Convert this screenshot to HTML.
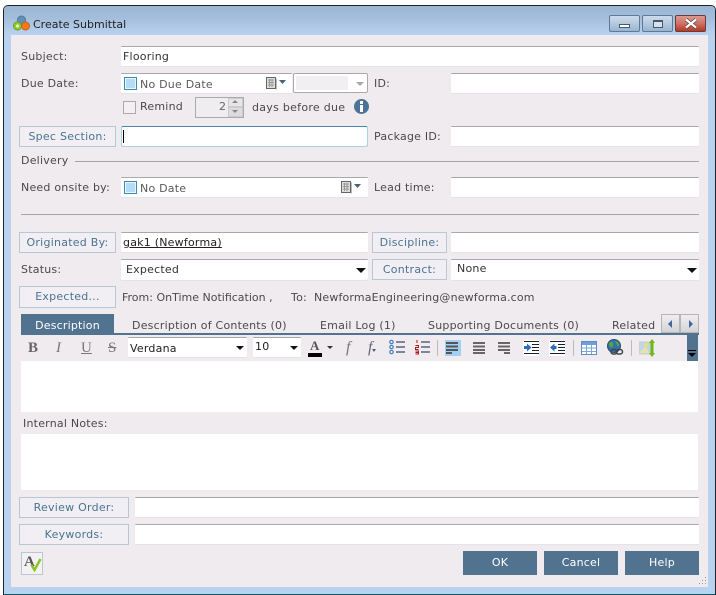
<!DOCTYPE html>
<html><head><meta charset="utf-8"><style>
html,body{margin:0;padding:0;background:#fff}
#r{position:relative;width:716px;height:595px;overflow:hidden;background:#fff;font-family:"DejaVu Sans","Liberation Sans",sans-serif;font-size:11px;color:#4a4a4a}
#r div,#r svg{position:absolute}
.t{white-space:nowrap;line-height:14px;height:14px;margin-top:1px;letter-spacing:.22px}
.i{background:#fff;border-top:1px solid #aaa8ae;box-sizing:border-box;border-radius:1px;box-shadow:0 1px 0 #e4e4e8}
.b{background:#f1eff4;border:1px solid #b7c8d4;box-sizing:border-box;color:#4a7390;text-align:center;white-space:nowrap;letter-spacing:.25px}
.k{background:#527390;color:#fff;text-align:center;line-height:24px;top:551px;height:24px;width:74px;letter-spacing:.2px}
</style></head><body><div id="r">
<div style="left:3px;top:5px;width:713px;height:590px;background:#b9d2ef;border:1px solid #222;border-bottom:1px solid #0a5a6a;border-radius:5px 5px 0 0;box-sizing:border-box"></div>
<div style="left:4px;top:6px;width:711px;height:29px;background:linear-gradient(#9ab6d5,#a3bddb 40%,#b9d2ef);border-radius:4px 4px 0 0"></div>
<div style="left:11px;top:35px;width:697px;height:552px;background:#efebee"></div>

<svg style="left:13px;top:15px" width="18" height="16" viewBox="0 0 18 16"><circle cx="8.500" cy="5" r="4" fill="#5b93c0" stroke="#5f7486"/><circle cx="4.500" cy="11" r="4" fill="#8fce2c" stroke="#6f9a2c"/><circle cx="12.500" cy="11" r="4" fill="#f07a1c" stroke="#c9620f"/><circle cx="4.500" cy="11" r="1.500" fill="#e6f5c5"/></svg>
<div class="t" style="left:33px;top:17px;color:#222;font-size:11px;letter-spacing:0">Create Submittal</div>

<div style="left:609px;top:15px;width:31px;height:17px;box-sizing:border-box;border:1px solid #5d7a96;border-radius:2px;background:linear-gradient(#cddbeb,#b4c9e0 50%,#9ab4d0)"></div>
<div style="left:619px;top:24px;width:11px;height:4px;background:#fff;border:1px solid #46586a;box-sizing:border-box"></div>
<div style="left:642px;top:15px;width:31px;height:17px;box-sizing:border-box;border:1px solid #5d7a96;border-radius:2px;background:linear-gradient(#cddbeb,#b4c9e0 50%,#9ab4d0)"></div>
<div style="left:653px;top:20px;width:10px;height:8px;box-sizing:border-box;border:1px solid #46586a;border-top-width:2px;background:#d5e1ee"></div>
<div style="left:675px;top:15px;width:31px;height:17px;box-sizing:border-box;border:1px solid #6e3a38;border-radius:2px;background:linear-gradient(#dc9a90,#cf7163 50%,#b33a24)"></div>
<svg style="left:684px;top:18px" width="14" height="11" viewBox="0 0 14 11"><path d="M2 1.500L12 9.500M12 1.500L2 9.500" stroke="#4a3a3a" stroke-width="3.600"/><path d="M2 1.500L12 9.500M12 1.500L2 9.500" stroke="#fff" stroke-width="2.400"/></svg>

<div class="t" style="left:21px;top:49px">Subject:</div>
<div class="i" style="left:121px;top:46px;width:578px;height:20px"></div>
<div class="t" style="left:123px;top:49px;color:#333">Flooring</div>

<div class="t" style="left:21px;top:76px">Due Date:</div>
<div class="i" style="left:121px;top:73px;width:171px;height:20px"></div>
<div style="left:124px;top:77px;width:13px;height:13px;box-sizing:border-box;border:1px solid #3f8bb0;background:#b5dcf7;outline:1px solid #eaf6fe;outline-offset:-2px"></div>
<div class="t" style="left:140px;top:77px;color:#5a5a5a">No Due Date</div>
<svg style="left:266px;top:77px" width="22" height="13" viewBox="0 0 22 13"><rect x=".5" y=".5" width="9" height="11" fill="#ddd" stroke="#666"/><path d="M2 3h6M2 5.500h6M2 8h6M3.500 2v8M6 2v8" stroke="#999"/><path d="M10.500 1.500v11" stroke="#bbb"/><path d="M13 3h7l-3.500 4z" fill="#46627c"/></svg>
<div style="left:293px;top:73px;width:75px;height:20px;background:#fff;border:1px solid #aaa;box-sizing:border-box;border-radius:2px"></div>
<div style="left:296px;top:76px;width:52px;height:14px;background:#f2eff2"></div>
<div style="left:356px;top:82px;border:4px solid transparent;border-top:4px solid #a8a8a8;border-bottom:0"></div>
<div class="t" style="left:374px;top:76px">ID:</div>
<div class="i" style="left:451px;top:73px;width:248px;height:20px"></div>

<div style="left:123px;top:101px;width:13px;height:13px;box-sizing:border-box;border:1px solid #aaa;background:#f2f0f3"></div>
<div class="t" style="left:140px;top:99px">Remind</div>
<div style="left:195px;top:97px;width:49px;height:21px;box-sizing:border-box;border:1px solid #aaa;background:#f0edf0"></div>
<div class="t" style="left:219px;top:99px;color:#666">2</div>
<div style="left:228px;top:98px;width:15px;height:9px;background:#e6e6e8;border:1px solid #ccc;box-sizing:border-box"></div>
<div style="left:228px;top:107px;width:15px;height:10px;background:#dcdcde;border:1px solid #ccc;box-sizing:border-box"></div>
<div style="left:232px;top:100px;border:3px solid transparent;border-bottom:3px solid #888;border-top:0"></div>
<div style="left:232px;top:110px;border:3px solid transparent;border-top:3px solid #888;border-bottom:0"></div>
<div class="t" style="left:252px;top:100px;letter-spacing:.28px">days before due</div>
<div style="left:354px;top:99px;width:15px;height:15px;border-radius:50%;background:#4b7398"></div>
<div style="left:360px;top:101px;width:3px;height:3px;background:#fff"></div>
<div style="left:360px;top:105px;width:3px;height:7px;background:#fff"></div>

<div class="b" style="left:19px;top:126px;width:97px;height:21px;line-height:19px">Spec Section:</div>
<div style="left:121px;top:126px;width:247px;height:21px;background:#fff;box-sizing:border-box;border:1px solid #a8d0ea;border-top:1px solid #4a86b0;border-radius:2px"></div>
<div style="left:123px;top:130px;width:1px;height:13px;background:#000"></div>
<div class="t" style="left:374px;top:129px">Package ID:</div>
<div class="i" style="left:451px;top:126px;width:248px;height:20px"></div>

<div class="t" style="left:21px;top:153px">Delivery</div>
<div style="left:75px;top:161px;width:624px;height:1px;background:#a5a3a9"></div>
<div class="t" style="left:21px;top:180px">Need onsite by:</div>
<div class="i" style="left:121px;top:177px;width:247px;height:20px"></div>
<div style="left:124px;top:181px;width:13px;height:13px;box-sizing:border-box;border:1px solid #3f8bb0;background:#b5dcf7;outline:1px solid #eaf6fe;outline-offset:-2px"></div>
<div class="t" style="left:140px;top:181px;color:#5a5a5a">No Date</div>
<svg style="left:341px;top:181px" width="22" height="13" viewBox="0 0 22 13"><rect x=".5" y=".5" width="9" height="11" fill="#ddd" stroke="#666"/><path d="M2 3h6M2 5.500h6M2 8h6M3.500 2v8M6 2v8" stroke="#999"/><path d="M10.500 1.500v11" stroke="#bbb"/><path d="M13 3h7l-3.500 4z" fill="#46627c"/></svg>
<div class="t" style="left:374px;top:180px">Lead time:</div>
<div class="i" style="left:451px;top:177px;width:248px;height:20px"></div>
<div style="left:21px;top:214px;width:678px;height:1px;background:#a5a3a9"></div>

<div class="b" style="left:19px;top:232px;width:97px;height:21px;line-height:19px">Originated By:</div>
<div class="i" style="left:121px;top:232px;width:247px;height:20px"></div>
<div class="t" style="left:123px;top:235px;color:#222;text-decoration:underline">gak1 (Newforma)</div>
<div class="b" style="left:372px;top:232px;width:75px;height:21px;line-height:19px">Discipline:</div>
<div class="i" style="left:451px;top:232px;width:248px;height:20px"></div>

<div class="t" style="left:21px;top:262px">Status:</div>
<div class="i" style="left:121px;top:259px;width:247px;height:21px"></div>
<div class="t" style="left:126px;top:262px;color:#333">Expected</div>
<div style="left:356px;top:268px;border:5px solid transparent;border-top:5px solid #111;border-bottom:0"></div>
<div class="b" style="left:372px;top:259px;width:75px;height:21px;line-height:19px">Contract:</div>
<div class="i" style="left:451px;top:259px;width:248px;height:21px"></div>
<div class="t" style="left:457px;top:261px;color:#333">None</div>
<div style="left:687px;top:268px;border:5px solid transparent;border-top:5px solid #111;border-bottom:0"></div>

<div class="b" style="left:19px;top:286px;width:97px;height:22px;line-height:20px">Expected...</div>
<div class="t" style="left:122px;top:290px;letter-spacing:0">From: OnTime Notification ,</div>
<div class="t" style="left:291px;top:290px">To:</div>
<div class="t" style="left:314px;top:290px;letter-spacing:.16px">NewformaEngineering@newforma.com</div>

<div style="left:21px;top:314px;width:93px;height:19px;background:#527390;color:#fff;text-align:center;line-height:23px;letter-spacing:.2px">Description</div>
<div class="t" style="left:132px;top:318px">Description of Contents (0)</div>
<div class="t" style="left:320px;top:318px">Email Log (1)</div>
<div class="t" style="left:428px;top:318px">Supporting Documents (0)</div>
<div class="t" style="left:612px;top:318px">Related</div>
<div style="left:661px;top:314px;width:19px;height:19px;box-sizing:border-box;border:1px solid #b5b5b8;background:linear-gradient(#f0eef0,#d4d4d8)"></div>
<div style="left:680px;top:314px;width:19px;height:19px;box-sizing:border-box;border:1px solid #b5b5b8;background:linear-gradient(#f0eef0,#d4d4d8)"></div>
<div style="left:668px;top:320px;border:4px solid transparent;border-right:4px solid #46659a;border-left:0"></div>
<div style="left:689px;top:320px;border:4px solid transparent;border-left:4px solid #46659a;border-right:0"></div>
<div style="left:21px;top:333px;width:678px;height:2px;background:#527390"></div>
<div style="left:687px;top:335px;width:11px;height:26px;background:#527390"></div>
<div style="left:688px;top:350px;width:8px;height:1px;background:#000"></div>
<div style="left:688px;top:353px;border:4px solid transparent;border-top:4px solid #000;border-bottom:0"></div>

<div class="t" style="left:28px;top:340px;font-family:'Liberation Serif',serif;font-size:15px;font-weight:bold;color:#666;letter-spacing:0">B</div>
<div class="t" style="left:56px;top:340px;font-family:'Liberation Serif',serif;font-size:15px;font-style:italic;color:#777;letter-spacing:0">I</div>
<div class="t" style="left:81px;top:340px;font-family:'Liberation Serif',serif;font-size:15px;text-decoration:underline;color:#777;letter-spacing:0">U</div>
<div class="t" style="left:108px;top:340px;font-family:'Liberation Serif',serif;font-size:15px;text-decoration:line-through;color:#777;letter-spacing:0">S</div>
<div class="i" style="left:128px;top:337px;width:119px;height:20px"></div>
<div class="t" style="left:130px;top:341px;color:#222">Verdana</div>
<div style="left:236px;top:346px;border:4px solid transparent;border-top:4px solid #111;border-bottom:0"></div>
<div class="i" style="left:253px;top:337px;width:48px;height:20px"></div>
<div class="t" style="left:255px;top:339px;color:#222">10</div>
<div style="left:290px;top:346px;border:4px solid transparent;border-top:4px solid #111;border-bottom:0"></div>
<div class="t" style="left:310px;top:338px;font-family:'Liberation Serif',serif;font-size:13px;font-weight:bold;color:#555;letter-spacing:0">A</div>
<div style="left:308px;top:353px;width:14px;height:4px;background:#000"></div>
<div style="left:327px;top:346px;border:3px solid transparent;border-top:3px solid #333;border-bottom:0"></div>
<div class="t" style="left:346px;top:340px;font-family:'Liberation Serif',serif;font-size:16px;font-style:italic;color:#777;letter-spacing:0">f</div>
<div class="t" style="left:368px;top:340px;font-family:'Liberation Serif',serif;font-size:16px;font-style:italic;color:#667;letter-spacing:0">f</div>
<div style="left:372px;top:349px;border:2px solid transparent;border-top:3px solid #46627c;border-bottom:0"></div>

<svg style="left:386px;top:339px" width="46" height="16" viewBox="0 0 46 16"><g fill="none" stroke="#3d7cc4" stroke-width="1.200"><circle cx="5.500" cy="3" r="1.700"/><circle cx="5.500" cy="8" r="1.700"/><circle cx="5.500" cy="13" r="1.700"/></g><path d="M10 3h9M10 8h9M10 13h9M35 3h9M35 8h9M35 13h9" stroke="#3a4a6a" stroke-width="1.200"/><path d="M31 1v3M29.500 6.500h3v2h-3v2h3M29.500 12h3v3h-3M29.500 13.500h3" stroke="#b01818" stroke-width="1" fill="none"/></svg>
<div style="left:437px;top:340px;width:1px;height:16px;background:#bbb"></div>
<div style="left:445px;top:340px;width:16px;height:16px;background:#a0d0f4"></div>
<svg style="left:446px;top:341px" width="120" height="14" viewBox="0 0 120 14"><path d="M0 2h12M0 5.500h12M0 9h12" stroke="#555" stroke-width="2"/><path d="M0 12h6" stroke="#555" stroke-width="2"/><path d="M27 2h12M27 5.500h12M27 9h12M27 12h12" stroke="#666" stroke-width="2"/><path d="M52 2h12M52 5.500h12M52 9h12M58 12h6" stroke="#666" stroke-width="2"/></svg>
<div style="left:523px;top:340px;width:16px;height:16px;background:#fff"></div>
<div style="left:549px;top:340px;width:16px;height:16px;background:#fff"></div>
<svg style="left:523px;top:340px" width="42" height="16" viewBox="0 0 42 16"><path d="M1 1.500h15M9 4.500h7M9 7.500h7M9 10.500h7M1 13.500h15M27 1.500h15M35 4.500h7M35 7.500h7M35 10.500h7M27 13.500h15" stroke="#123" stroke-width="1"/><path d="M1 6h3V3.500L8.500 7.500 4 11.500V9H1zM33.500 6h-2V3.500L27 7.500l4.500 4V9h2z" fill="#2d6cc0"/></svg>
<div style="left:573px;top:340px;width:1px;height:16px;background:#bbb"></div>
<svg style="left:581px;top:341px" width="16" height="14" viewBox="0 0 16 14"><rect x=".5" y=".5" width="15" height="13" fill="#fff" stroke="#5b8fc8"/><rect x="1" y="1" width="14" height="3" fill="#6f9fd6"/><path d="M1 7h14M1 10.500h14M5.500 4v9M10.500 4v9" stroke="#7aa6d8"/></svg>
<svg style="left:606px;top:339px" width="18" height="17" viewBox="0 0 18 17"><circle cx="8" cy="7" r="6.500" fill="#2f70b0" stroke="#264f78"/><path d="M3 4c3-3 5 0 4 3s-3 1-4-1zM9 2c3 0 5 3 4 5s-3-3-4-5z" fill="#5aa632"/><g fill="none" stroke="#444" stroke-width="1.500"><rect x="5" y="10.500" width="6" height="4.500" rx="2.200"/><rect x="10" y="10.500" width="6.500" height="4.500" rx="2.200"/></g></svg>
<div style="left:631px;top:340px;width:1px;height:16px;background:#bbb"></div>
<svg style="left:639px;top:339px" width="16" height="18" viewBox="0 0 16 18"><rect x="0" y="3" width="11" height="12" fill="#bcd6ee" stroke="#ccc"/><path d="M0 14l6-6 5 6z" fill="#e8e4a8"/><circle cx="7" cy="6" r="2" fill="#f4e060"/><path d="M13 3v12" stroke="#6fb81a" stroke-width="3"/><path d="M10 4l3-4 3 4zM10 14l3 4 3-4z" fill="#6fb81a"/></svg>

<div style="left:21px;top:361px;width:677px;height:51px;background:#fff"></div>
<div class="t" style="left:23px;top:416px">Internal Notes:</div>
<div style="left:21px;top:434px;width:677px;height:56px;background:#fff"></div>

<div class="b" style="left:19px;top:497px;width:110px;height:21px;line-height:19px">Review Order:</div>
<div class="i" style="left:135px;top:497px;width:564px;height:20px"></div>
<div class="b" style="left:19px;top:524px;width:110px;height:21px;line-height:19px">Keywords:</div>
<div class="i" style="left:135px;top:524px;width:564px;height:20px"></div>

<div style="left:21px;top:552px;width:22px;height:23px;box-sizing:border-box;border:1px solid #b7c8d4;background:#f3f1f4"></div>
<div class="t" style="left:24px;top:554px;font-family:'Liberation Serif',serif;font-size:15px;font-weight:bold;color:#555;letter-spacing:0">A</div>
<svg style="left:30px;top:558px" width="13" height="14" viewBox="0 0 13 14"><path d="M1.500 7l3 5 6-11" fill="none" stroke="#8cc41c" stroke-width="2.400"/></svg>

<div class="k" style="left:463px">OK</div>
<div class="k" style="left:544px">Cancel</div>
<div class="k" style="left:625px">Help</div>
<svg style="left:697px;top:576px" width="10" height="10" viewBox="0 0 10 10"><path d="M8 1h1v1H8zM5 4h1v1H5zM8 4h1v1H8zM2 7h1v1H2zM5 7h1v1H5zM8 7h1v1H8z" fill="#999"/></svg>
</div></body></html>
